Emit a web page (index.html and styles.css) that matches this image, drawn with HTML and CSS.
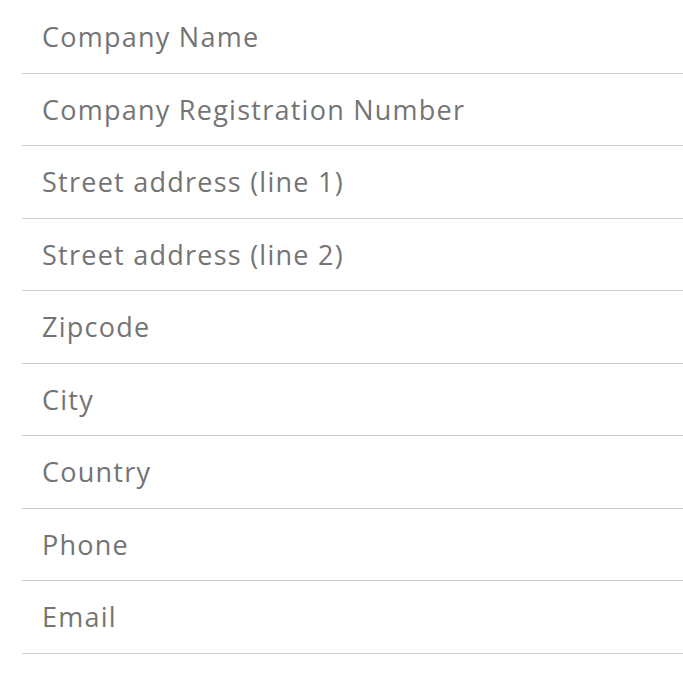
FILE: index.html
```html
<!DOCTYPE html>
<html lang="en">
<head>
<meta charset="utf-8">
<title>Company details</title>
<link rel="stylesheet" href="styles.css">
</head>
<body>
<form class="company-form">
  <input class="field" type="text" placeholder="Company Name">
  <input class="field" type="text" placeholder="Company Registration Number">
  <input class="field" type="text" placeholder="Street address (line 1)">
  <input class="field" type="text" placeholder="Street address (line 2)">
  <input class="field" type="text" placeholder="Zipcode">
  <input class="field" type="text" placeholder="City">
  <input class="field" type="text" placeholder="Country">
  <input class="field" type="tel" placeholder="Phone">
  <input class="field" type="email" placeholder="Email">
</form>
</body>
</html>
```
FILE: styles.css
```css
html, body {
  margin: 0;
  background: #ffffff;
}

.company-form {
  display: flex;
  flex-direction: column;
  padding: 1px 0 0 22px;
}

.field {
  box-sizing: border-box;
  height: 72.5px;
  margin: 0;
  padding: 0 20px;
  border: 0;
  border-bottom: 1px solid #cccccc;
  background: transparent;
  font-family: "Open Sans", sans-serif;
  font-size: 27px;
  font-weight: 400;
  letter-spacing: 1.25px;
  color: #6f6f6f;
  outline: none;
}

.field::placeholder {
  color: #747474;
  opacity: 1;
}
```
